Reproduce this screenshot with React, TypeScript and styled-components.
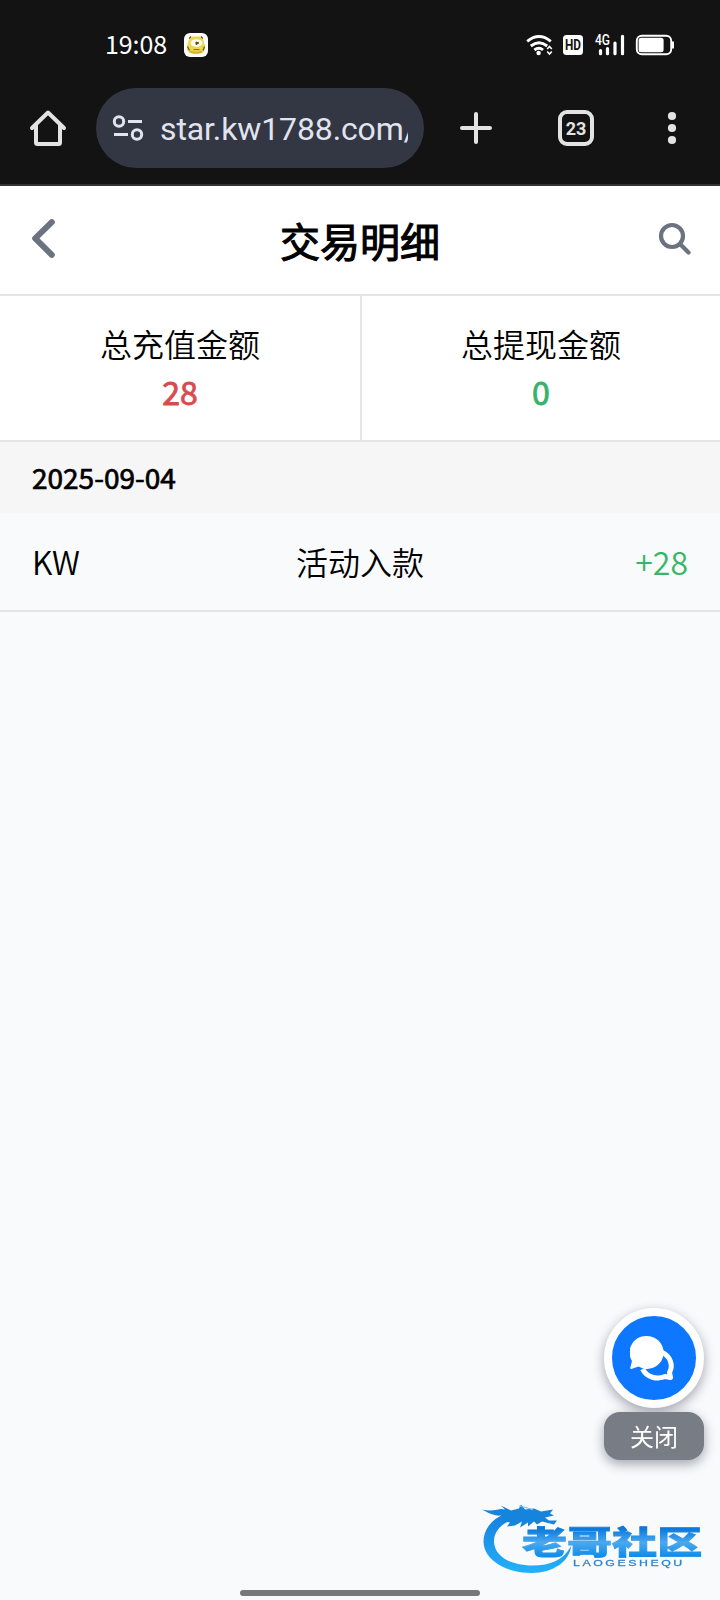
import React from 'react';
import styled, { createGlobalStyle } from 'styled-components';

const GlobalStyle = createGlobalStyle`
  * {
    box-sizing: border-box;
  }

  body {
    margin: 0;
    background: #f9fafc;
    color: #000;
    font-family: 'Noto Sans CJK SC', 'Noto Sans', sans-serif;
  }

  svg {
    display: block;
  }
`;

const Page = styled.div`
  display: flex;
  flex-direction: column;
  width: 720px;
  height: 1600px;
  overflow: hidden;
  background: #f9fafc;
`;

const BrowserChrome = styled.header`
  height: 186px;
  background: #131313;
  border-bottom: 2px solid #333;
`;

const StatusBar = styled.div`
  display: flex;
  align-items: center;
  height: 88px;
  padding: 2px 45px 0 105px;
`;

const Clock = styled.span`
  width: 79px;
  padding-bottom: 4px;
  font-size: 25px;
  line-height: 30px;
  letter-spacing: -0.1px;
  color: #fff;
`;

const StatusIcons = styled.div`
  display: flex;
  align-items: center;
  margin-left: auto;
`;

const Toolbar = styled.div`
  display: flex;
  align-items: center;
  height: 80px;
  padding-left: 28px;
`;

const AddressBar = styled.div`
  display: flex;
  align-items: center;
  width: 328px;
  height: 80px;
  margin: 0 34px 0 28px;
  padding: 0 16px;
  border-radius: 40px;
  background: #323743;
`;

const Url = styled.span`
  flex: 1;
  margin-left: 15px;
  padding-top: 2px;
  overflow: hidden;
  white-space: nowrap;
  font-family: Roboto, sans-serif;
  font-size: 32px;
  line-height: 44px;
  letter-spacing: -0.12px;
  color: #e1e4ee;
`;

const TabCount = styled.div`
  display: flex;
  align-items: center;
  justify-content: center;
  width: 36px;
  height: 36px;
  margin: 0 72px 0 64px;
  border: 4px solid #e3e3e3;
  border-radius: 9px;
  font-family: Roboto, sans-serif;
  font-size: 18px;
  font-weight: 700;
  color: #e3e3e3;
`;

const TitleBar = styled.div`
  display: flex;
  align-items: center;
  justify-content: space-between;
  height: 110px;
  padding: 0 28px 4px 31px;
  background: #fff;
  border-bottom: 2px solid #e5e5e6;
`;

const Title = styled.h1`
  margin: 0;
  padding: 4px 0 0 5px;
  font-size: 40px;
  font-weight: 400;
  line-height: 56px;
  -webkit-text-stroke: 1.1px #000;
`;

const Stats = styled.section`
  display: grid;
  grid-template-columns: 1fr 1fr;
  height: 146px;
  background: #fff;
  border-bottom: 2px solid #e5e5e6;
`;

const Stat = styled.div`
  display: flex;
  flex-direction: column;
  align-items: center;
  padding-top: 23px;

  & + & {
    border-left: 2px solid #e5e5e6;
  }
`;

const StatLabel = styled.span`
  font-size: 32px;
  font-weight: 350;
  line-height: 48px;
`;

const StatValue = styled.span<{ $color: string }>`
  font-size: 32px;
  font-weight: 400;
  line-height: 48px;
  color: ${({ $color }) => $color};
  -webkit-text-stroke: 0.8px ${({ $color }) => $color};
`;

const DateHeading = styled.h2`
  height: 71px;
  margin: 0;
  padding: 0 32px;
  background: #f6f6f6;
  font-size: 28px;
  font-weight: 400;
  line-height: 70px;
  -webkit-text-stroke: 0.7px #000;
`;

const Row = styled.div`
  display: grid;
  grid-template-columns: 1fr 1fr 1fr;
  align-items: center;
  height: 99px;
  padding: 0 32px 2px;
  border-bottom: 2px solid #e5e5e6;
  font-size: 32px;
  font-weight: 350;
  line-height: 48px;
`;

const Cell = styled.span<{ $align?: string; $color?: string }>`
  text-align: ${({ $align }) => $align || 'left'};
  color: ${({ $color }) => $color || '#000'};
`;

const Support = styled.aside`
  position: fixed;
  top: 1308px;
  left: 604px;
  display: flex;
  flex-direction: column;
  gap: 4px;
  width: 100px;
`;

const ChatButton = styled.button`
  display: flex;
  align-items: center;
  justify-content: center;
  width: 100px;
  height: 100px;
  padding: 0;
  border: 8px solid #fff;
  border-radius: 50%;
  background: #0d78ff;
  box-shadow: 0 4px 12px rgba(30, 35, 60, 0.4);
`;

const CloseButton = styled.button`
  height: 48px;
  padding: 0;
  border: none;
  border-radius: 16px;
  background: #777c85;
  box-shadow: 0 4px 12px rgba(30, 35, 60, 0.4);
  font-family: inherit;
  font-size: 24px;
  font-weight: 400;
  line-height: 46px;
  color: #fff;
`;

const Watermark = styled.div`
  position: fixed;
  top: 1498px;
  left: 480px;
`;

const GestureBar = styled.div`
  width: 240px;
  height: 6px;
  margin: auto auto 4px;
  border-radius: 3px;
  background: #777;
`;

const AppBadge = () => (
  <svg width="24" height="24" viewBox="0 0 24 24">
    <rect width="24" height="24" rx="6" fill="#fff" />
    <path d="M5 6q1-3 4-2.500h6q3-.5 4 2.500l2 7q.5 5-3 7-6 1.500-12 0-3.500-2-3-7z" fill="#ecd557" />
    <ellipse cx="12.500" cy="10" rx="6" ry="3.800" fill="#fffbe4" />
    <path d="M12 9l2.800 1-2.800 1.500z" fill="#554619" stroke="#554619" />
    <path d="M5 5.500l2-2M17 3.500l2 2M3.500 13.500l2 4M20.500 13.500l-1.500 4" stroke="#6f5c22" strokeWidth="1.200" />
    <path d="M9.500 16.600h6" stroke="#8a6a16" strokeWidth="1" />
    <path d="M6 18.500q6 2.500 12 0" stroke="#e0b31c" strokeWidth="2" fill="none" />
  </svg>
);

const StatusGlyphs = () => (
  <svg width="150" height="24" viewBox="525 33 150 24" fill="none">
    <g stroke="#fff" strokeWidth="2.900">
      <path d="M527.200 41.300q11.800-9.600 23.600 0" />
      <path d="M530.800 46q8.200-6.600 16.400 0" />
      <path d="M534.400 50q4.600-3.600 8.600 0" />
    </g>
    <circle cx="538.600" cy="53" r="2.200" fill="#fff" />
    <path d="M547.200 49l2.300-2.500 2.300 2.500M547.200 51.500l2.300 2.500 2.300-2.500" stroke="#fff" strokeWidth="1.600" />
    <rect x="563" y="35" width="20" height="20" rx="3.500" fill="#fff" />
    <text x="573" y="50.300" textAnchor="middle" textLength="16" lengthAdjust="spacingAndGlyphs" fontFamily="Roboto, sans-serif" fontSize="14.500" fontWeight="700" fill="#131313">HD</text>
    <text x="595" y="45.200" textLength="15" lengthAdjust="spacingAndGlyphs" fontFamily="Roboto, sans-serif" fontSize="14" fontWeight="500" fill="#fff">4G</text>
    <path d="M600.500 50.500v3.200M607.500 48.500v5.200M615 43v10.700M622.500 36.300v17.400" stroke="#fff" strokeWidth="3.200" strokeLinecap="round" />
    <rect x="636.800" y="35.800" width="34.400" height="18.400" rx="5" stroke="#fff" strokeWidth="1.900" />
    <rect x="638.600" y="37.800" width="25" height="14.400" rx="2.500" fill="#fff" />
    <path d="M673 41.500v7" stroke="#fff" strokeWidth="2" />
  </svg>
);

const HomeIcon = () => (
  <svg width="40" height="40" viewBox="28 108 40 40" fill="none" stroke="#e3e3e3" strokeWidth="4" strokeLinecap="round" strokeLinejoin="round">
    <path d="M32 128l16-15.500L64 128" />
    <path d="M36 126v16.500q0 1.500 1.500 1.500h21q1.500 0 1.500-1.500V126" />
  </svg>
);

const SiteInfoIcon = () => (
  <svg width="33" height="32" viewBox="112 112 33 32" fill="none" stroke="#e1e4ee" strokeWidth="3">
    <circle cx="119" cy="121.500" r="4.700" />
    <path d="M128 121.500h14M114 134.500h14" />
    <circle cx="137" cy="134.500" r="4.700" />
  </svg>
);

const PlusIcon = () => (
  <svg width="36" height="36" viewBox="0 0 36 36" stroke="#e3e3e3" strokeWidth="4" strokeLinecap="round">
    <path d="M18 4v28M4 18h28" />
  </svg>
);

const MenuIcon = () => (
  <svg width="12" height="36" viewBox="0 0 12 36" fill="#e3e3e3">
    <circle cx="6" cy="6" r="4.100" />
    <circle cx="6" cy="18" r="4.100" />
    <circle cx="6" cy="30" r="4.100" />
  </svg>
);

const BackIcon = () => (
  <svg width="26" height="40" viewBox="31 218 26 40" fill="none" stroke="#6b7280" strokeWidth="6" strokeLinecap="round" strokeLinejoin="round">
    <path d="M51.800 222.200L35.200 238.400l16.600 16.400" />
  </svg>
);

const SearchIcon = () => (
  <svg width="34" height="34" viewBox="658 221 34 34" fill="none" stroke="#6b7280" strokeWidth="4.200" strokeLinecap="round">
    <circle cx="672" cy="236" r="11" />
    <path d="M680.500 244.500l8 8" />
  </svg>
);

const ChatIcon = () => (
  <svg width="48" height="48" viewBox="630 1334 48 48">
    <path
      d="M661.500 1352c9 4 12 13.500 8 20.500l1 5-5.500-1c-8 3.500-18 1-22.500-7.500"
      fill="none"
      stroke="#fff"
      strokeWidth="5"
      strokeLinejoin="round"
    />
    <path d="M647 1336a16.500 16.500 0 1 1-8.500 30.600l-7.200 2.300q-1.300.2-1-1.200l1.700-6.700A16.500 16.500 0 0 1 647 1336z" fill="#fff" />
  </svg>
);

const DragonLogo = () => (
  <svg width="230" height="80" viewBox="480 1498 230 80">
    <defs>
      <linearGradient id="ring" x1="0" y1="0" x2="0" y2="1">
        <stop offset="0" stopColor="#167fdc" />
        <stop offset="1" stopColor="#22b2fb" />
      </linearGradient>
      <linearGradient id="letters" x1="0" y1="0" x2="0" y2="1">
        <stop offset="0.250" stopColor="#0c79dc" />
        <stop offset="0.550" stopColor="#4aa9ee" />
        <stop offset="0.850" stopColor="#128ce8" />
      </linearGradient>
    </defs>
    <path
      d="M505 1514C491 1519 483.500 1530 483.500 1542C484 1560 506 1573 532 1573C553 1573 570 1561 571 1546C564 1560 550 1565.500 533 1565.500C510 1565.500 494 1556 494 1541C494 1531 502 1523 514 1519Z"
      fill="url(#ring)"
    />
    <path
      d="M482 1509.500q9 2 19-.5l4 .5-4-4 10 5 8-2 2-4 4 5 9-1 7 3 12-2-3 4 4 2-9 2 4 3h8l-3 4-12-3-5 3-3-3-6 5v-4l-8 5 2-6-7 4-8 1 3-4-6-1 3-4-7 2q2-3 1-4-7 1-17-5z"
      fill="#1683dc"
    />
    <path d="M519 1506q10 2 14 4" fill="none" stroke="#7fbdea" strokeWidth="1.200" />
    <text
      transform="translate(522 1554) scale(1.430 1)"
      textLength="126"
      fontFamily="'Noto Sans CJK SC', sans-serif"
      fontSize="31.500"
      fontWeight="900"
      fill="url(#letters)"
      stroke="url(#letters)"
      strokeWidth=".8"
    >
      老哥社区
    </text>
    <text transform="translate(573 1566) scale(1.300 1)" textLength="84" fontFamily="'Liberation Sans', sans-serif" fontSize="9.500" fill="#2b86cf" stroke="#2b86cf" strokeWidth=".3">
      LAOGESHEQU
    </text>
  </svg>
);

const stats = [
  { label: '总充值金额', value: '28', color: '#d94a4b' },
  { label: '总提现金额', value: '0', color: '#36b36b' },
];

const App = () => {
  return (
    <Page>
      <GlobalStyle />
      <BrowserChrome>
        <StatusBar>
          <Clock>19:08</Clock>
          <AppBadge />
          <StatusIcons>
            <StatusGlyphs />
          </StatusIcons>
        </StatusBar>
        <Toolbar>
          <HomeIcon />
          <AddressBar>
            <SiteInfoIcon />
            <Url>star.kw1788.com/</Url>
          </AddressBar>
          <PlusIcon />
          <TabCount>23</TabCount>
          <MenuIcon />
        </Toolbar>
      </BrowserChrome>

      <TitleBar>
        <BackIcon />
        <Title>交易明细</Title>
        <SearchIcon />
      </TitleBar>

      <Stats>
        {stats.map(stat => (
          <Stat key={stat.label}>
            <StatLabel>{stat.label}</StatLabel>
            <StatValue $color={stat.color}>{stat.value}</StatValue>
          </Stat>
        ))}
      </Stats>

      <DateHeading>2025-09-04</DateHeading>
      <Row>
        <Cell>KW</Cell>
        <Cell $align="center">活动入款</Cell>
        <Cell $align="right" $color="#36b765">+28</Cell>
      </Row>

      <Support>
        <ChatButton aria-label="chat">
          <ChatIcon />
        </ChatButton>
        <CloseButton>关闭</CloseButton>
      </Support>
      <Watermark>
        <DragonLogo />
      </Watermark>
      <GestureBar />
    </Page>
  );
};

export default App;
